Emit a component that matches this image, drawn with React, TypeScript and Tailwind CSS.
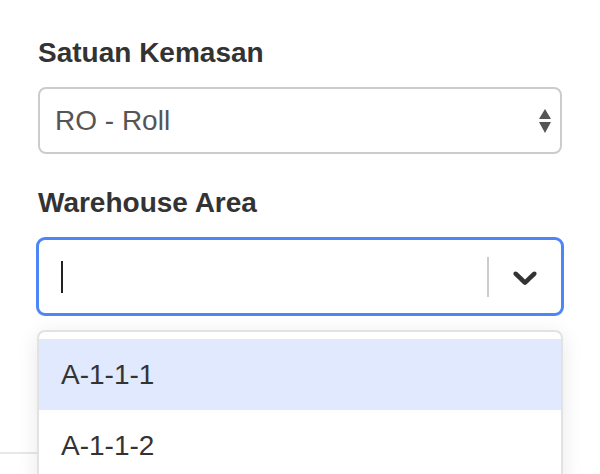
import { useState } from "react";

const areas = ["A-1-1-1", "A-1-1-2"];

function SortArrows() {
  return (
    <svg width="14" height="26" viewBox="0 0 14 26" className="shrink-0">
      <polygon points="7,1 13,11 1,11" fill="#555" />
      <polygon points="1,14 13,14 7,25" fill="#555" />
    </svg>
  );
}

function Chevron() {
  return (
    <svg width="40" height="40" viewBox="0 0 20 20" fill="#333">
      <path d="M4.516 7.548c0.436-0.446 1.043-0.481 1.576 0l3.908 3.747 3.908-3.747c0.533-0.481 1.141-0.446 1.574 0 0.436 0.445 0.408 1.197 0 1.615-0.406 0.418-4.695 4.502-4.695 4.502-0.217 0.223-0.502 0.335-0.787 0.335s-0.57-0.112-0.789-0.335c0 0-4.287-4.084-4.695-4.502s-0.436-1.17 0-1.615z" />
    </svg>
  );
}

export default function App() {
  const [focused] = useState(0);

  return (
    <div className="relative h-[474px] w-[600px] overflow-hidden bg-white font-['Liberation_Sans',Arial,sans-serif]">
      <div className="pt-[37px]">
        <label className="block px-[38px] text-[28px] font-bold leading-[32px] text-[#333]">
          Satuan Kemasan
        </label>
        <div className="mx-[38px] mt-[18px] flex h-[67px] items-center justify-between rounded-[8px] border-2 border-[#ccc] pl-[15px] pr-[8px] text-[28px] text-[#555]">
          <span>RO - Roll</span>
          <SortArrows />
        </div>

        <label className="mt-[33px] block px-[38px] text-[28px] font-bold leading-[32px] text-[#333]">
          Warehouse Area
        </label>
        <div className="relative mx-[36px] mt-[18px]">
          <div className="flex h-[79px] items-center rounded-[9px] border-[3px] border-[#4f86f7] bg-white">
            <div className="flex flex-1 items-center pl-[22px]">
              <span className="h-[32px] w-[2px] bg-[#222]" />
            </div>
            <span className="h-[40px] w-[2px] bg-[#ccc]" />
            <div className="flex w-[72px] items-center justify-center">
              <Chevron />
            </div>
          </div>

          <div className="absolute left-[1px] right-[1px] top-[93px] z-10 h-[160px] rounded-[8px] border-2 border-[#e2e2e2] bg-white pt-[7px] shadow-[0_4px_22px_rgba(0,0,0,0.09)]">
            {areas.map((a, i) => (
              <div
                key={a}
                className={`flex h-[71px] items-center pl-[22px] text-[28px] text-[#333] ${
                  i === focused ? "bg-[#e0e9fd]" : "bg-white"
                }`}
              >
                {a}
              </div>
            ))}
          </div>
        </div>

        <div className="mt-[136px] w-[300px] border-t-2 border-[#e8e8e8]" />
      </div>
    </div>
  );
}
